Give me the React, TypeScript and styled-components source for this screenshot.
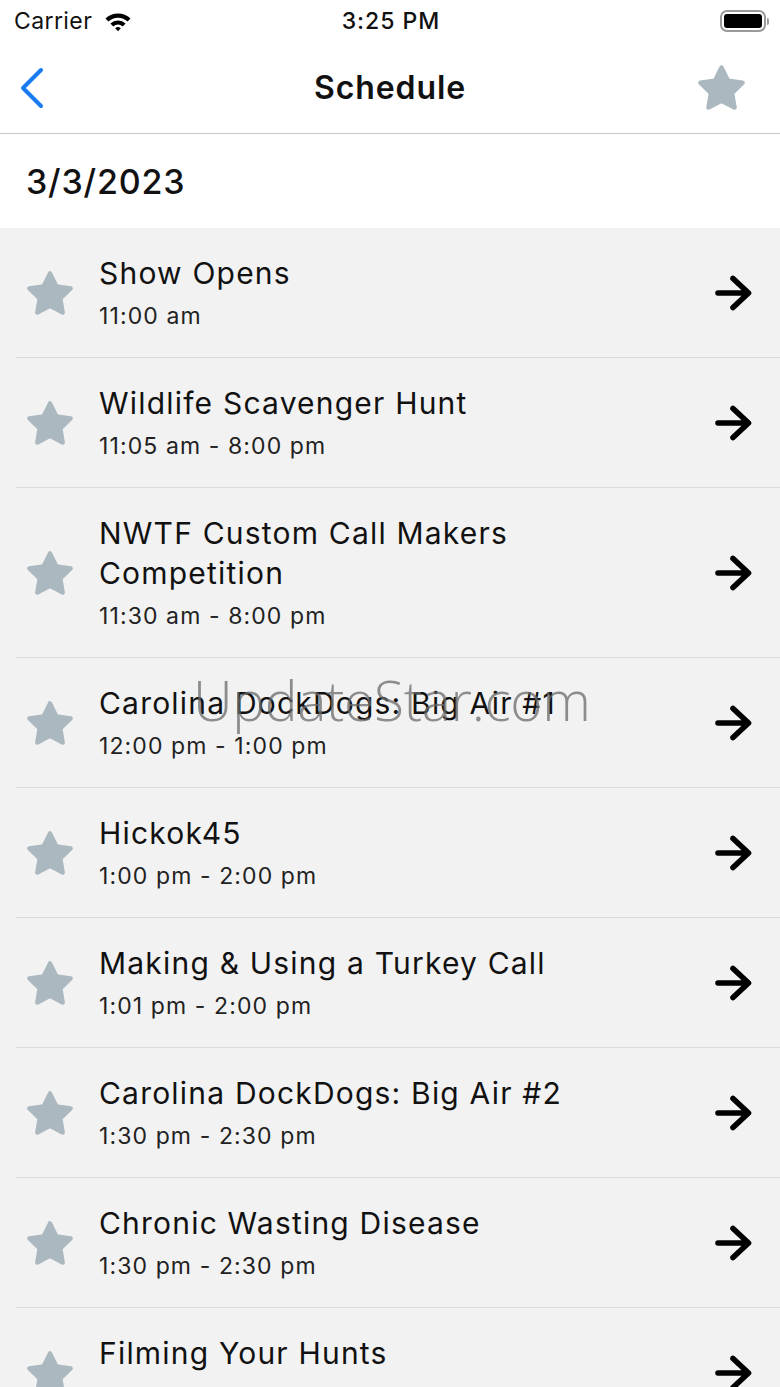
import React from "react";
import styled, { createGlobalStyle } from "styled-components";

const GlobalStyle = createGlobalStyle`
  html, body { margin: 0; padding: 0; background: #ffffff; }
  body { font-family: Inter, "Noto Sans", sans-serif; -webkit-font-smoothing: antialiased; }
  * { box-sizing: border-box; }
`;

const Screen = styled.div`
  position: relative;
  width: 780px;
  height: 1387px;
  overflow: hidden;
  background: #f2f2f2;
`;

const StatusBar = styled.div`
  height: 42px;
  background: #ffffff;
  display: grid;
  grid-template-columns: 1fr auto 1fr;
  align-items: center;
  padding: 0 12px 0 14px;
  font-family: Inter, "Noto Sans", sans-serif;
  font-size: 23px;
  color: #111;
`;

const StatusLeft = styled.div`
  display: flex;
  align-items: center;
  gap: 12px;
  letter-spacing: 0.4px;
`;

const StatusTime = styled.div`
  font-weight: 500;
  font-size: 23px;
  letter-spacing: 1px;
`;

const StatusRight = styled.div`
  display: flex;
  justify-content: flex-end;
  align-items: center;
`;

const Battery = styled.div`
  position: relative;
  width: 46px;
  height: 22px;
  border: 2px solid #9a9a9a;
  border-radius: 7px;
  padding: 2px;
  margin-right: 2px;
  &::after {
    content: "";
    position: absolute;
    right: -5px;
    top: 6px;
    width: 2px;
    height: 7px;
    border-radius: 0 2px 2px 0;
    background: #9a9a9a;
  }
`;

const BatteryFill = styled.div`
  width: 100%;
  height: 100%;
  background: #000;
  border-radius: 3px;
`;

const NavBar = styled.div`
  height: 92px;
  background: #ffffff;
  border-bottom: 1px solid #c6c6c8;
  display: grid;
  grid-template-columns: 120px 1fr 120px;
  align-items: center;
`;

const BackButton = styled.div`
  display: flex;
  align-items: center;
  padding-left: 18px;
`;

const NavTitle = styled.div`
  text-align: center;
  font-size: 32px;
  font-weight: 600;
  color: #111;
  letter-spacing: 0.9px;
`;

const NavAction = styled.div`
  display: flex;
  justify-content: flex-end;
  padding-right: 35px;
`;

const DateHeader = styled.div`
  height: 94px;
  background: #ffffff;
  display: flex;
  align-items: center;
  padding-left: 26px;
  font-size: 34px;
  font-weight: 500;
  color: #111;
  letter-spacing: 0.8px;
`;

const List = styled.div`
  background: #f2f2f2;
`;

const Row = styled.div`
  margin-left: 16px;
  display: flex;
  align-items: center;
  padding: 25px 28px 24px 11px;
  border-bottom: 1px solid #dadada;
`;

const StarSlot = styled.div`
  width: 46px;
  flex: none;
  display: flex;
  justify-content: center;
`;

const RowText = styled.div`
  flex: 1;
  margin-left: 26px;
  display: flex;
  flex-direction: column;
`;

const RowTitle = styled.div`
  font-size: 30px;
  line-height: 40px;
  color: #111;
  max-width: 560px;
  letter-spacing: 1.2px;
`;

const RowTime = styled.div`
  margin-top: 6px;
  font-size: 23px;
  line-height: 34px;
  color: #222;
  letter-spacing: 1.1px;
`;

const Watermark = styled.div`
  position: absolute;
  left: 193px;
  top: 662px;
  font-family: "Open Sans", sans-serif;
  font-size: 55px;
  font-weight: 300;
  color: rgba(105, 105, 105, 0.75);
  pointer-events: none;
  letter-spacing: -0.3px;
`;

const Star: React.FC<{ w?: number; h?: number }> = ({ w = 46, h = 44 }) => (
  <svg width={w} height={h} viewBox="1.4 1.5 21.2 20.3">
    <path
      d="M12 2.6 L14.94 8.56 L21.51 9.51 L16.76 14.15 L17.88 20.69 L12 17.6 L6.12 20.69 L7.24 14.15 L2.49 9.51 L9.06 8.56 Z"
      fill="#abb8bf"
      stroke="#abb8bf"
      strokeWidth={2}
      strokeLinejoin="round"
    />
  </svg>
);

const Arrow = () => (
  <svg width="40" height="36" viewBox="0 0 40 36">
    <path
      d="M6 18 H36 M21 3.5 L36.5 18 L21 32.5"
      fill="none"
      stroke="#000"
      strokeWidth={5.6}
      strokeLinecap="round"
      strokeLinejoin="round"
    />
  </svg>
);

const Wifi = () => (
  <svg width="28" height="21" viewBox="0 0 28 21">
    <path d="M1.5 7.5 A18 18 0 0 1 26.5 7.5 L23.6 10.5 A14 14 0 0 0 4.4 10.5 Z" fill="#000" />
    <path d="M6.4 12.5 A11 11 0 0 1 21.6 12.5 L18.7 15.4 A7 7 0 0 0 9.3 15.4 Z" fill="#000" />
    <path d="M11.2 17.3 A4 4 0 0 1 16.8 17.3 L14 20.2 Z" fill="#000" />
  </svg>
);

const Chevron = () => (
  <svg width="28" height="42" viewBox="0 0 28 42">
    <path
      d="M23 3 L5 21 L23 39"
      fill="none"
      stroke="#1a7cf5"
      strokeWidth={4}
      strokeLinecap="round"
      strokeLinejoin="round"
    />
  </svg>
);

type Item = { title: string; time: string };

const items: Item[] = [
  { title: "Show Opens", time: "11:00 am" },
  { title: "Wildlife Scavenger Hunt", time: "11:05 am - 8:00 pm" },
  { title: "NWTF Custom Call Makers Competition", time: "11:30 am - 8:00 pm" },
  { title: "Carolina DockDogs: Big Air #1", time: "12:00 pm - 1:00 pm" },
  { title: "Hickok45", time: "1:00 pm - 2:00 pm" },
  { title: "Making & Using a Turkey Call", time: "1:01 pm - 2:00 pm" },
  { title: "Carolina DockDogs: Big Air #2", time: "1:30 pm - 2:30 pm" },
  { title: "Chronic Wasting Disease", time: "1:30 pm - 2:30 pm" },
  { title: "Filming Your Hunts", time: "2:00 pm - 3:00 pm" },
];

export default function App() {
  return (
    <>
      <GlobalStyle />
      <Screen>
        <StatusBar>
          <StatusLeft>
            <span>Carrier</span>
            <Wifi />
          </StatusLeft>
          <StatusTime>3:25 PM</StatusTime>
          <StatusRight>
            <Battery>
              <BatteryFill />
            </Battery>
          </StatusRight>
        </StatusBar>
        <NavBar>
          <BackButton>
            <Chevron />
          </BackButton>
          <NavTitle>Schedule</NavTitle>
          <NavAction>
            <Star w={47} h={45} />
          </NavAction>
        </NavBar>
        <DateHeader>3/3/2023</DateHeader>
        <List>
          {items.map((it) => (
            <Row key={it.title}>
              <StarSlot>
                <Star />
              </StarSlot>
              <RowText>
                <RowTitle>{it.title}</RowTitle>
                <RowTime>{it.time}</RowTime>
              </RowText>
              <Arrow />
            </Row>
          ))}
        </List>
        <Watermark>UpdateStar.com</Watermark>
      </Screen>
    </>
  );
}
